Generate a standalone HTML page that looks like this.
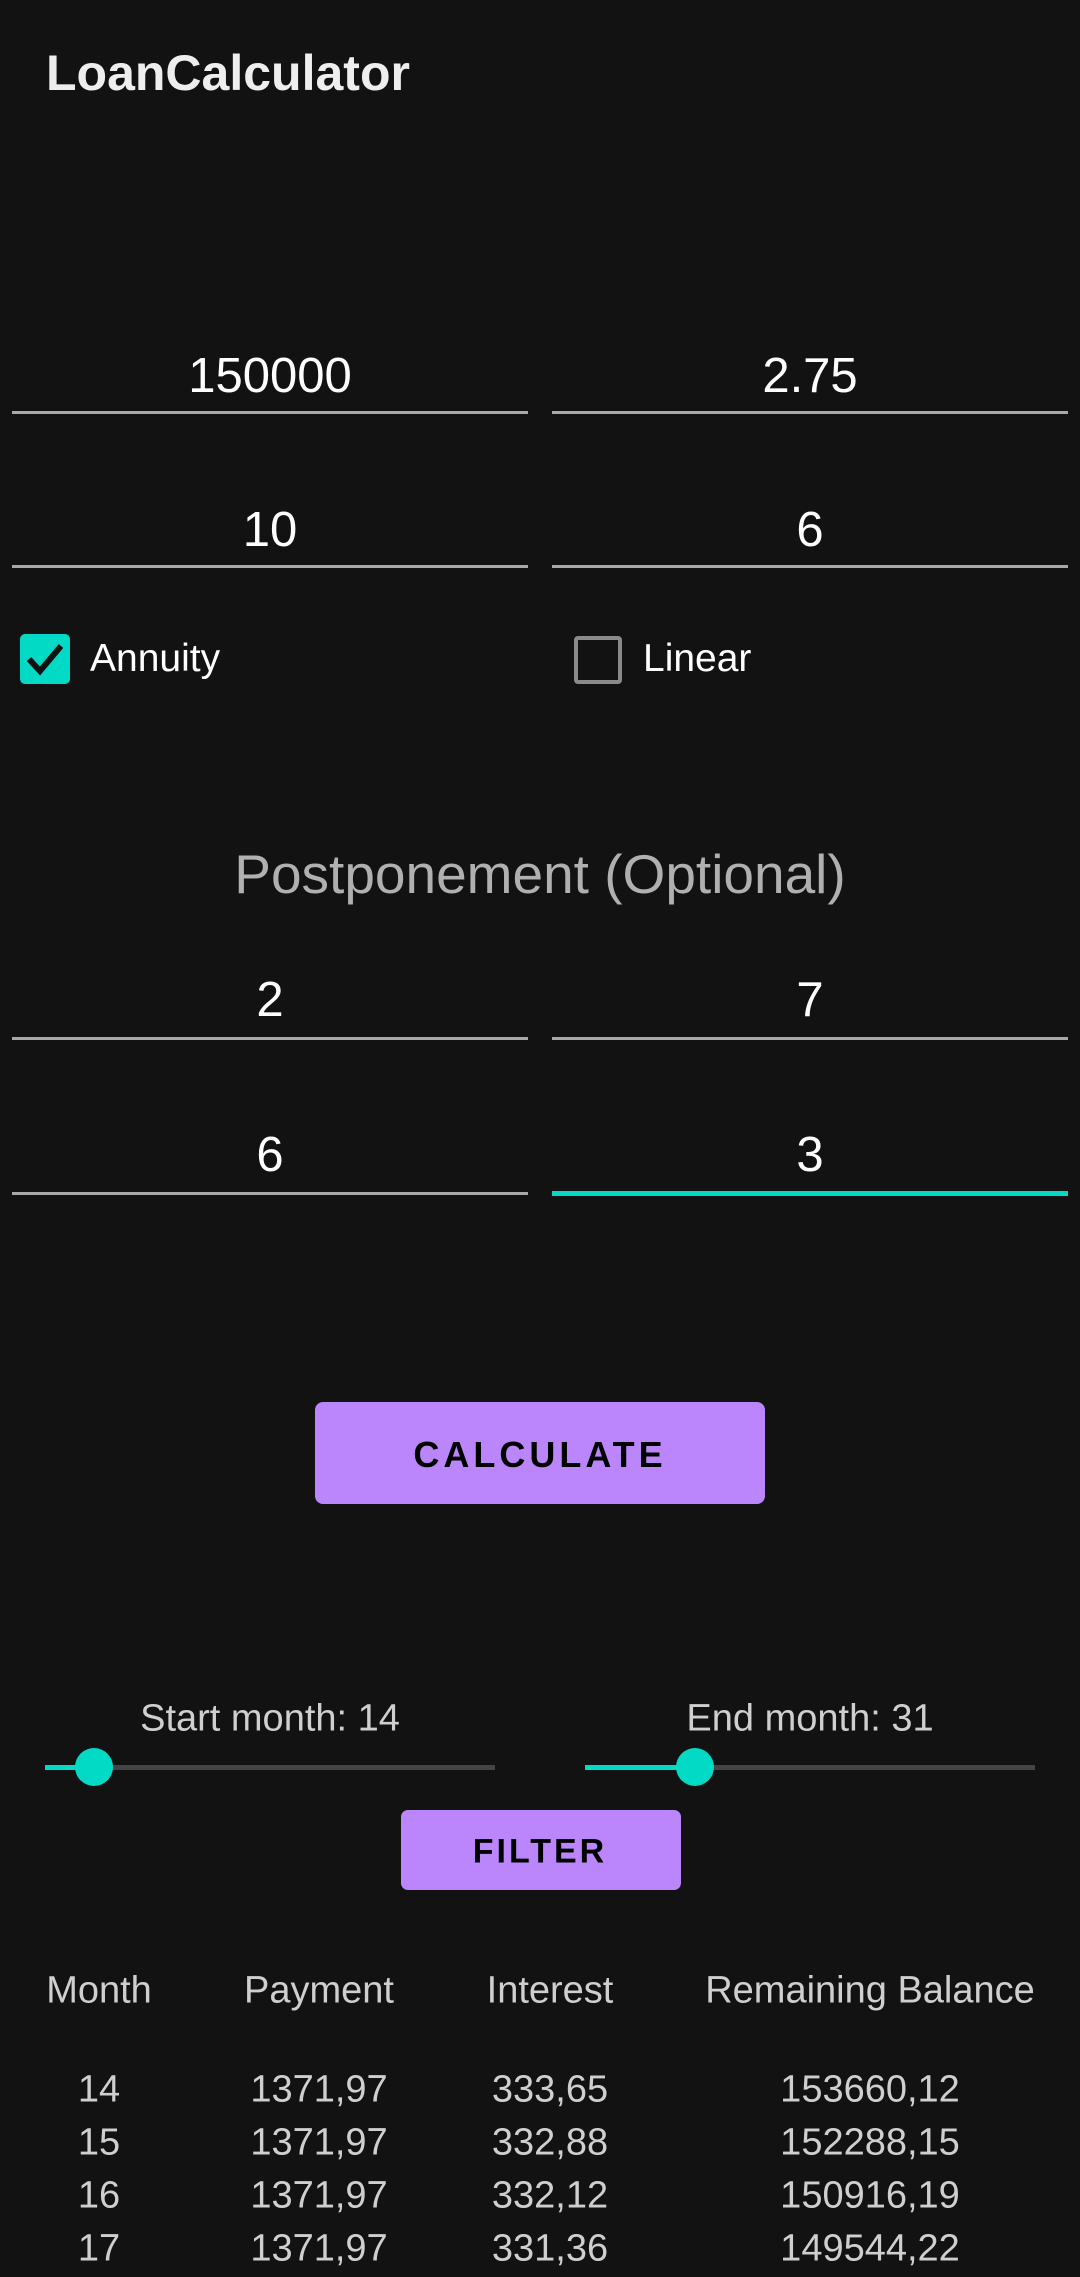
<!DOCTYPE html>
<html><head><meta charset="utf-8"><style>
body{margin:0;background:#121212;width:1080px;height:2277px;overflow:hidden;position:relative;font-family:"Liberation Sans",sans-serif;color:#fff}
.a{position:absolute}
.t{position:absolute;transform:translate(-50%,-50%);white-space:nowrap}
.ul{position:absolute;height:3px;background:#a8a8a8}
.in{font-size:49px;color:#fff}
.tb{font-size:38px;color:#cfcfcf}
</style></head><body>
<div class="a" style="left:46px;top:44px;font-size:50px;font-weight:bold;color:#eee">LoanCalculator</div>

<div class="t in" style="left:270px;top:376px">150000</div>
<div class="t in" style="left:810px;top:376px">2.75</div>
<div class="ul" style="left:12px;width:516px;top:411px"></div>
<div class="ul" style="left:552px;width:516px;top:411px"></div>

<div class="t in" style="left:270px;top:530px">10</div>
<div class="t in" style="left:810px;top:530px">6</div>
<div class="ul" style="left:12px;width:516px;top:565px"></div>
<div class="ul" style="left:552px;width:516px;top:565px"></div>

<div class="a" style="left:20px;top:634px;width:50px;height:50px;background:#03dac5;border-radius:5px">
<svg width="50" height="50" viewBox="0 0 50 50"><path d="M9 25 L20 37 L41 12" stroke="#121212" stroke-width="6" fill="none"/></svg></div>
<div class="a" style="left:90px;top:637px;font-size:39px">Annuity</div>
<div class="a" style="left:574px;top:636px;width:40px;height:40px;border:4px solid #8a8a8a;border-radius:4px"></div>
<div class="a" style="left:643px;top:637px;font-size:39px">Linear</div>

<div class="t" style="left:540px;top:874px;font-size:55px;color:#b0b0b0">Postponement (Optional)</div>

<div class="t in" style="left:270px;top:1000px">2</div>
<div class="t in" style="left:810px;top:1000px">7</div>
<div class="ul" style="left:12px;width:516px;top:1037px"></div>
<div class="ul" style="left:552px;width:516px;top:1037px"></div>

<div class="t in" style="left:270px;top:1155px">6</div>
<div class="t in" style="left:810px;top:1155px">3</div>
<div class="ul" style="left:12px;width:516px;top:1192px"></div>
<div class="ul" style="left:552px;width:516px;top:1191px;height:5px;background:#03dac5"></div>

<div class="a" style="left:315px;top:1402px;width:450px;height:102px;background:#bb86fc;border-radius:8px"></div>
<div class="t" style="left:540px;top:1455px;font-size:36px;color:#000;letter-spacing:4px;font-weight:bold">CALCULATE</div>

<div class="t tb" style="left:270px;top:1719px">Start month: 14</div>
<div class="t tb" style="left:810px;top:1719px">End month: 31</div>
<div class="a" style="left:45px;top:1765px;width:450px;height:5px;background:#444"></div>
<div class="a" style="left:45px;top:1765px;width:49px;height:5px;background:#03dac5"></div>
<div class="a" style="left:75px;top:1748px;width:38px;height:38px;border-radius:50%;background:#03dac5"></div>
<div class="a" style="left:585px;top:1765px;width:450px;height:5px;background:#444"></div>
<div class="a" style="left:585px;top:1765px;width:110px;height:5px;background:#03dac5"></div>
<div class="a" style="left:676px;top:1748px;width:38px;height:38px;border-radius:50%;background:#03dac5"></div>

<div class="a" style="left:401px;top:1810px;width:280px;height:80px;background:#bb86fc;border-radius:7px"></div>
<div class="t" style="left:540px;top:1852px;font-size:34px;color:#000;letter-spacing:3px;font-weight:bold">FILTER</div>

<div class="t tb" style="left:99px;top:1991px">Month</div>
<div class="t tb" style="left:319px;top:1991px">Payment</div>
<div class="t tb" style="left:550px;top:1991px">Interest</div>
<div class="t tb" style="left:870px;top:1991px">Remaining Balance</div>

<div class="t tb" style="left:99px;top:2090px">14</div><div class="t tb" style="left:319px;top:2090px">1371,97</div><div class="t tb" style="left:550px;top:2090px">333,65</div><div class="t tb" style="left:870px;top:2090px">153660,12</div>
<div class="t tb" style="left:99px;top:2143px">15</div><div class="t tb" style="left:319px;top:2143px">1371,97</div><div class="t tb" style="left:550px;top:2143px">332,88</div><div class="t tb" style="left:870px;top:2143px">152288,15</div>
<div class="t tb" style="left:99px;top:2196px">16</div><div class="t tb" style="left:319px;top:2196px">1371,97</div><div class="t tb" style="left:550px;top:2196px">332,12</div><div class="t tb" style="left:870px;top:2196px">150916,19</div>
<div class="t tb" style="left:99px;top:2249px">17</div><div class="t tb" style="left:319px;top:2249px">1371,97</div><div class="t tb" style="left:550px;top:2249px">331,36</div><div class="t tb" style="left:870px;top:2249px">149544,22</div>
</body></html>
